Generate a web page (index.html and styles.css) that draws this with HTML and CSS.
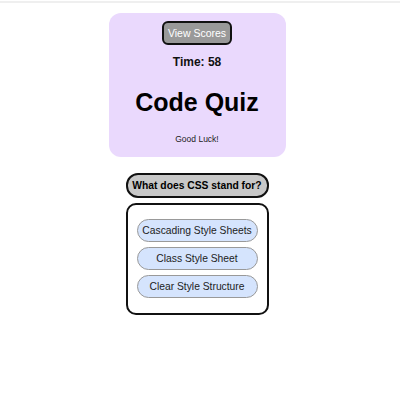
FILE: index.html
```html
<!DOCTYPE html>
<html>
<head>
<meta charset="utf-8">
<link rel="stylesheet" href="styles.css">
</head>
<body>
<div class="topline"></div>
<main class="page">
  <section class="card">
    <button class="scores">View Scores</button>
    <div class="timer">Time: 58</div>
    <h1 class="title">Code Quiz</h1>
    <p class="luck">Good Luck!</p>
  </section>
  <div class="question">What does CSS stand for?</div>
  <div class="answers">
    <button class="answer">Cascading Style Sheets</button>
    <button class="answer">Class Style Sheet</button>
    <button class="answer">Clear Style Structure</button>
  </div>
</main>
</body>
</html>
```
FILE: styles.css
```css
html, body {
  margin: 0;
  padding: 0;
  background: #fff;
  font-family: "Liberation Sans", Arial, sans-serif;
}
.topline {
  height: 2px;
  margin-top: 1px;
  background: #efefef;
}
.page {
  display: flex;
  flex-direction: column;
  align-items: center;
  padding-top: 10px;
  padding-right: 6px;
}
.card {
  width: 177px;
  height: 144px;
  box-sizing: border-box;
  background: #ead9fd;
  border-radius: 12px;
  display: flex;
  flex-direction: column;
  align-items: center;
  padding-top: 8px;
}
.scores {
  font-family: "Liberation Sans", Arial, sans-serif;
  width: 70px;
  height: 24px;
  box-sizing: border-box;
  background: #999;
  color: #fff;
  border: 2px solid #111;
  border-radius: 6px;
  font-size: 10.5px;
  white-space: nowrap;
  padding: 0;
}
.timer {
  margin-top: 10px;
  font-size: 12px;
  font-weight: bold;
  color: #111;
}
.title {
  margin: 18px 0 0;
  font-size: 25px;
  font-weight: bold;
  color: #000;
  line-height: 30px;
}
.luck {
  margin: 16.5px 0 0;
  font-size: 8.5px;
  color: #222;
}
.question {
  margin-top: 16px;
  width: 143px;
  height: 25px;
  box-sizing: border-box;
  background: #c8c8c8;
  border: 2px solid #111;
  border-radius: 12px;
  font-size: 10.3px;
  font-weight: bold;
  display: flex;
  align-items: center;
  justify-content: center;
  color: #000;
  white-space: nowrap;
}
.answers {
  margin-top: 5px;
  width: 143px;
  height: 112px;
  box-sizing: border-box;
  border: 2px solid #111;
  border-radius: 10px;
  display: flex;
  flex-direction: column;
  align-items: center;
  gap: 5px;
  padding-top: 14px;
}
.answer {
  font-family: "Liberation Sans", Arial, sans-serif;
  width: 121px;
  height: 23px;
  box-sizing: border-box;
  background: #d5e4fd;
  border: 1px solid #999;
  border-radius: 12px;
  font-size: 10.3px;
  color: #222;
  padding: 0;
  white-space: nowrap;
}
```
